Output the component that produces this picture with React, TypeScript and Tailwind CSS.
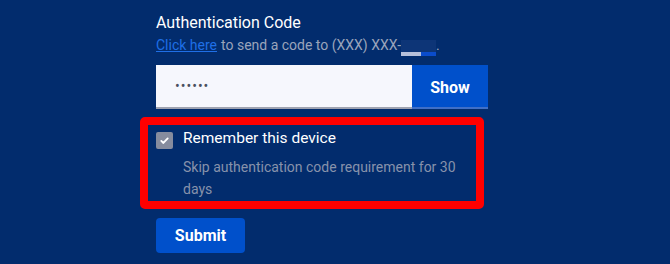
import React from 'react';

const App = () => {
  return (
    <div className="w-[670px] h-[264px] bg-[#022c6d] overflow-hidden font-['Roboto',_'Liberation_Sans',_sans-serif]">
      <div className="pl-[156px] pt-[11px] w-[488px]">
        {/* Heading */}
        <div className="text-[16px] leading-[24px] text-white">Authentication Code</div>
        <div className="text-[14px] leading-[20px] text-[#9aa4bb] flex items-end">
          <a href="#" className="text-[#1f6fe6] underline">Click here</a>
          <span className="ml-[4px]">to send a code to (XXX) XXX-</span>
          {/* redacted digits */}
          <span className="w-[35px] h-[16px] bg-[#0d3577] flex flex-col justify-end mb-[-1px]">
            <span className="flex h-[4px]">
              <span className="w-[20px] bg-[#b6c0da]" />
              <span className="flex-1 bg-[#0a4ccc]" />
            </span>
          </span>
          <span>.</span>
        </div>

        {/* Code input */}
        <div className="mt-[10px] flex h-[44px]">
          <div className="flex-1 bg-[#f6f7fd] border-b-2 border-[#9fa3b1] flex items-center pl-[19px] text-[#4a5060] text-[14px] tracking-[1px]">
            ••••••
          </div>
          <button className="w-[76px] bg-[#0050cb] text-white font-bold text-[16px] pt-[3px] border-b-2 border-[#3f6fc7]">
            Show
          </button>
        </div>
      </div>

      {/* Remember device, highlighted */}
      <div className="ml-[140px] mt-[8px] w-[344px] h-[92px] border-[8px] border-[#ff0000] rounded-[5px] pl-[8px] pt-[7px] flex gap-[10px]">
        <div className="w-[17px] h-[17px] bg-[#868c9e] rounded-[2px] flex items-center justify-center shrink-0">
          <svg width="11" height="11" viewBox="0 0 12 12" fill="none">
            <path d="M2.5 6.5l2.3 2.2 4.7-5" stroke="white" strokeWidth="2" strokeLinecap="round" strokeLinejoin="round" />
          </svg>
        </div>
        <div className="w-[288px]">
          <div className="text-[15.5px] leading-[20px] text-white -mt-[4px]">Remember this device</div>
          <div className="mt-[8px] text-[14px] leading-[22px] text-[#8792ab]">
            Skip authentication code requirement for 30 days
          </div>
        </div>
      </div>

      <div className="pl-[156px] mt-[9px]">
        <button className="w-[89px] h-[35px] bg-[#0050cb] rounded-[4px] text-white font-bold text-[16px]">
          Submit
        </button>
      </div>
    </div>
  );
};

export default App;
